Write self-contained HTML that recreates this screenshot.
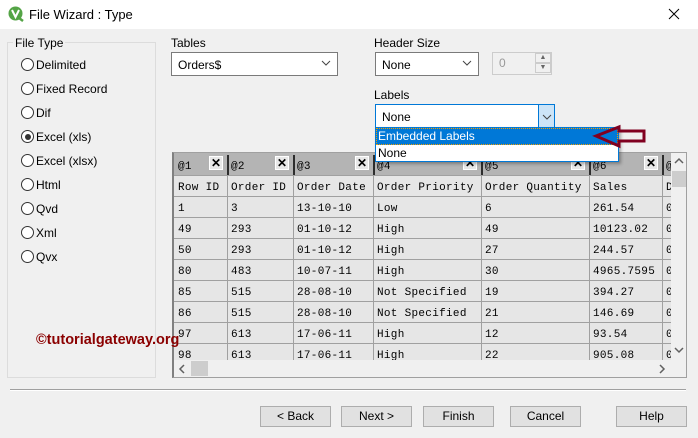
<!DOCTYPE html>
<html><head><style>
*{margin:0;padding:0;box-sizing:border-box}
body{width:698px;height:438px;background:#f0f0f0;font-family:"Liberation Sans",sans-serif;font-size:12px;color:#000;position:relative;overflow:hidden}
.a{position:absolute}
.title{left:0;top:0;width:698px;height:29px;background:#fff}
.radio{position:absolute;left:21px;width:13px;height:13px;border:1px solid #333;border-radius:50%;background:#fff}
.rl{position:absolute;left:36px;font-size:12px}
.combo{position:absolute;background:#fff;border:1px solid #7a7a7a;height:24px;font-size:12px;padding:5px 0 0 6px}
.chev{position:absolute;right:6px;top:6px}
.mono{font-family:"Liberation Mono",monospace;font-size:11.5px;letter-spacing:0.3px}
.btn{position:absolute;top:406px;height:21px;width:71px;border:1px solid #adadad;background:#e1e1e1;text-align:center;line-height:19px;font-size:12px}
.hx{position:absolute;top:3px;width:14px;height:14px;border:1px solid #fff;background:#e8e8e8;font-size:12px;line-height:12px;text-align:center;font-weight:bold}
</style></head><body>
<div class="a title"></div>
<svg class="a" style="left:8px;top:6px" width="16" height="16"><circle cx="7.5" cy="7.5" r="7" fill="#54a446"/><path d="M4 4 L7.5 11 L11 4" stroke="#fff" stroke-width="2" fill="none"/><path d="M11 12 L15 15" stroke="#54a446" stroke-width="2.5"/></svg>
<div class="a" style="left:29px;top:7px;font-size:13px">File Wizard : Type</div>
<svg class="a" style="left:668px;top:8px" width="12" height="12"><path d="M1 1L11 11M11 1L1 11" stroke="#000" stroke-width="1"/></svg>

<div class="a" style="left:7px;top:42px;width:149px;height:336px;border:1px solid #dcdcdc"></div>
<div class="a" style="left:13px;top:36px;background:#f0f0f0;padding:0 2px;font-size:12px">File Type</div>
<div class="radio" style="top:58px"></div><div class="rl" style="top:58px">Delimited</div>
<div class="radio" style="top:82px"></div><div class="rl" style="top:82px">Fixed Record</div>
<div class="radio" style="top:106px"></div><div class="rl" style="top:106px">Dif</div>
<div class="radio" style="top:130px"><div style="position:absolute;left:2.5px;top:2.5px;width:6px;height:6px;border-radius:50%;background:#333"></div></div><div class="rl" style="top:130px">Excel (xls)</div>
<div class="radio" style="top:154px"></div><div class="rl" style="top:154px">Excel (xlsx)</div>
<div class="radio" style="top:178px"></div><div class="rl" style="top:178px">Html</div>
<div class="radio" style="top:202px"></div><div class="rl" style="top:202px">Qvd</div>
<div class="radio" style="top:226px"></div><div class="rl" style="top:226px">Xml</div>
<div class="radio" style="top:250px"></div><div class="rl" style="top:250px">Qvx</div>

<div class="a" style="left:171px;top:36px">Tables</div>
<div class="combo" style="left:171px;top:52px;width:167px">Orders$<svg class="chev" width="10" height="8"><path d="M1 2L5 6L9 2" stroke="#444" fill="none"/></svg></div>
<div class="a" style="left:374px;top:36px">Header Size</div>
<div class="combo" style="left:375px;top:52px;width:104px">None<svg class="chev" width="10" height="8"><path d="M1 2L5 6L9 2" stroke="#444" fill="none"/></svg></div>
<div class="a" style="left:492px;top:52px;width:60px;height:23px;border:1px solid #ccc;background:#f0f0f0;color:#999;padding:3px 0 0 6px">0</div>
<div class="a" style="left:535px;top:53px;width:16px;height:10px;border:1px solid #ccc;font-size:7px;color:#666;text-align:center;line-height:8px">▲</div>
<div class="a" style="left:535px;top:63px;width:16px;height:10px;border:1px solid #ccc;font-size:7px;color:#666;text-align:center;line-height:8px">▼</div>
<div class="a" style="left:374px;top:88px">Labels</div>

<!-- table -->
<div class="a" style="left:172px;top:152px;width:515px;height:226px;border:1px solid #a0a0a0;border-left:2px solid #808080;background:#f0f0f0;overflow:hidden">
<svg class="a mono" style="left:0;top:0" width="497" height="207">
<rect x="0" y="0" width="497" height="22" fill="#b4b4b4"/>
<rect x="0" y="22" width="497" height="185" fill="#e6e6e6"/>
<g stroke="#a0a0a0"><line x1="0" y1="43.5" x2="497" y2="43.5"/><line x1="0" y1="64.5" x2="497" y2="64.5"/><line x1="0" y1="85.5" x2="497" y2="85.5"/><line x1="0" y1="106.5" x2="497" y2="106.5"/><line x1="0" y1="127.5" x2="497" y2="127.5"/><line x1="0" y1="148.5" x2="497" y2="148.5"/><line x1="0" y1="169.5" x2="497" y2="169.5"/><line x1="0" y1="190.5" x2="497" y2="190.5"/><line x1="0" y1="22.5" x2="497" y2="22.5"/>
<line x1="53.5" y1="22" x2="53.5" y2="207"/><line x1="119.5" y1="22" x2="119.5" y2="207"/><line x1="199.5" y1="22" x2="199.5" y2="207"/><line x1="307.5" y1="22" x2="307.5" y2="207"/><line x1="415.5" y1="22" x2="415.5" y2="207"/><line x1="488.5" y1="22" x2="488.5" y2="207"/></g>
<g stroke="#000" stroke-width="1.5"><line x1="54" y1="2" x2="54" y2="22"/><line x1="120" y1="2" x2="120" y2="22"/><line x1="200" y1="2" x2="200" y2="22"/><line x1="308" y1="2" x2="308" y2="22"/><line x1="416" y1="2" x2="416" y2="22"/><line x1="489" y1="2" x2="489" y2="22"/></g>
<g font-family="Liberation Mono,monospace" font-size="11" fill="#000">
<text x="4" y="16">@1</text><text x="57" y="16">@2</text><text x="123" y="16">@3</text><text x="203" y="16">@4</text><text x="311" y="16">@5</text><text x="419" y="16">@6</text><text x="492" y="16">@</text>
<text y="37"><tspan x="4">Row ID</tspan><tspan x="57">Order ID</tspan><tspan x="123">Order Date</tspan><tspan x="203">Order Priority</tspan><tspan x="311">Order Quantity</tspan><tspan x="419">Sales</tspan><tspan x="492">D</tspan></text>
<text y="58"><tspan x="4">1</tspan><tspan x="57">3</tspan><tspan x="123">13-10-10</tspan><tspan x="203">Low</tspan><tspan x="311">6</tspan><tspan x="419">261.54</tspan><tspan x="492">0</tspan></text>
<text y="79"><tspan x="4">49</tspan><tspan x="57">293</tspan><tspan x="123">01-10-12</tspan><tspan x="203">High</tspan><tspan x="311">49</tspan><tspan x="419">10123.02</tspan><tspan x="492">0</tspan></text>
<text y="100"><tspan x="4">50</tspan><tspan x="57">293</tspan><tspan x="123">01-10-12</tspan><tspan x="203">High</tspan><tspan x="311">27</tspan><tspan x="419">244.57</tspan><tspan x="492">0</tspan></text>
<text y="121"><tspan x="4">80</tspan><tspan x="57">483</tspan><tspan x="123">10-07-11</tspan><tspan x="203">High</tspan><tspan x="311">30</tspan><tspan x="419">4965.7595</tspan><tspan x="492">0</tspan></text>
<text y="142"><tspan x="4">85</tspan><tspan x="57">515</tspan><tspan x="123">28-08-10</tspan><tspan x="203">Not Specified</tspan><tspan x="311">19</tspan><tspan x="419">394.27</tspan><tspan x="492">0</tspan></text>
<text y="163"><tspan x="4">86</tspan><tspan x="57">515</tspan><tspan x="123">28-08-10</tspan><tspan x="203">Not Specified</tspan><tspan x="311">21</tspan><tspan x="419">146.69</tspan><tspan x="492">0</tspan></text>
<text y="184"><tspan x="4">97</tspan><tspan x="57">613</tspan><tspan x="123">17-06-11</tspan><tspan x="203">High</tspan><tspan x="311">12</tspan><tspan x="419">93.54</tspan><tspan x="492">0</tspan></text>
<text y="205"><tspan x="4">98</tspan><tspan x="57">613</tspan><tspan x="123">17-06-11</tspan><tspan x="203">High</tspan><tspan x="311">22</tspan><tspan x="419">905.08</tspan><tspan x="492">0</tspan></text>
</g></svg>
<div class="hx" style="left:35px">✕</div><div class="hx" style="left:101px">✕</div><div class="hx" style="left:181px">✕</div><div class="hx" style="left:289px">✕</div><div class="hx" style="left:397px">✕</div><div class="hx" style="left:470px">✕</div>
<!-- scrollbars -->
<div class="a" style="left:497px;top:0;width:17px;height:207px;background:#f0f0f0"></div>
<div class="a" style="left:498px;top:18px;width:15px;height:16px;background:#cdcdcd"></div>
<svg class="a" style="left:500px;top:4px" width="10" height="8"><path d="M1 6L5 2L9 6" stroke="#606060" fill="none" stroke-width="1.5"/></svg>
<svg class="a" style="left:500px;top:193px" width="10" height="8"><path d="M1 2L5 6L9 2" stroke="#606060" fill="none" stroke-width="1.5"/></svg>
<div class="a" style="left:0;top:207px;width:497px;height:17px;background:#f0f0f0"></div>
<div class="a" style="left:17px;top:208px;width:17px;height:15px;background:#cdcdcd"></div>
<svg class="a" style="left:4px;top:211px" width="8" height="10"><path d="M6 1L2 5L6 9" stroke="#606060" fill="none" stroke-width="1.5"/></svg>
<svg class="a" style="left:484px;top:211px" width="8" height="10"><path d="M2 1L6 5L2 9" stroke="#606060" fill="none" stroke-width="1.5"/></svg>
</div>

<!-- labels combo + dropdown -->
<div class="combo" style="left:375px;top:104px;width:180px;border-color:#0078d7">None</div>
<div class="a" style="left:538px;top:105px;width:16px;height:22px;background:#cce4f7;border-left:1px solid #0078d7"><svg style="position:absolute;left:3px;top:8px" width="10" height="8"><path d="M1 2L5 6L9 2" stroke="#444" fill="none"/></svg></div>
<div class="a" style="left:375px;top:127px;width:244px;height:35px;background:#fff;border:1px solid #0078d7;box-shadow:2px 2px 3px rgba(0,0,0,.3)">
<div style="height:17px;background:#0078d7;color:#fff;padding:1px 0 0 2px;outline:1px dotted #f0a000;outline-offset:-1px">Embedded Labels</div>
<div style="padding:1px 0 0 2px">None</div></div>
<svg class="a" style="left:592px;top:124px" width="56" height="26"><path d="M4 12L27 3L27 7L52 7L52 17L27 17L27 22Z" fill="none" stroke="#800020" stroke-width="3"/></svg>

<div class="a" style="left:36px;top:332px;color:#8b0000;font-weight:bold;font-size:14.5px;font-family:'Liberation Sans',sans-serif">©tutorialgateway.org</div>

<div class="a" style="left:10px;top:389px;width:676px;height:2px;border-top:1px solid #a0a0a0;border-bottom:1px solid #fff"></div>
<div class="btn" style="left:260px">&lt; Back</div>
<div class="btn" style="left:341px">Next &gt;</div>
<div class="btn" style="left:423px">Finish</div>
<div class="btn" style="left:510px">Cancel</div>
<div class="btn" style="left:616px">Help</div>
</body></html>
